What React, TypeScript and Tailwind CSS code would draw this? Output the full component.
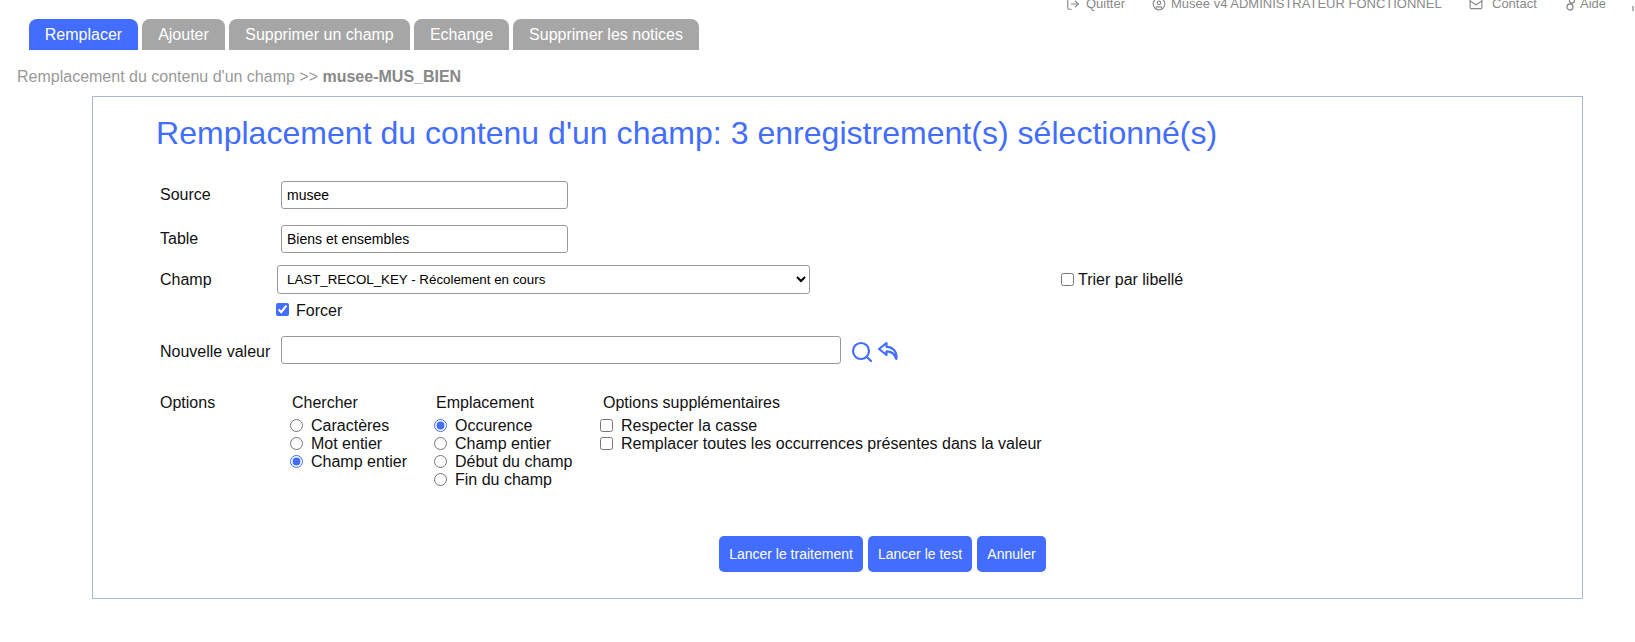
import React from "react";
import { Search, LogOut, CircleUser, Mail } from "lucide-react";

const Tab = ({ children, active, w }: { children: React.ReactNode; active?: boolean; w: string }) => (
  <div className={`${w} h-[31px] pt-[1px] rounded-t-[8px] flex items-center justify-center text-[16px] text-white ${active ? "bg-[#426dff]" : "bg-[#a6a6a6]"}`}>{children}</div>
);
const Radio = ({ label, checked }: { label: string; checked?: boolean }) => (
  <label className="flex items-center h-[18px] -ml-[2px]">
    <input type="radio" readOnly checked={!!checked} className="w-[13px] h-[13px] mr-[8px] accent-[#426dff]" />
    <span className="pt-[2px]">{label}</span>
  </label>
);
const Check = ({ label }: { label: string }) => (
  <label className="flex items-center h-[18px] -ml-[3px]">
    <input type="checkbox" readOnly className="w-[13px] h-[13px] mr-[8px]" />
    <span className="pt-[2px]">{label}</span>
  </label>
);
const Btn = ({ children, w }: { children: React.ReactNode; w: string }) => (
  <div className={`${w} h-[36px] rounded-[5px] bg-[#426dff] text-white text-[14px] flex items-center justify-center`}>{children}</div>
);

const ReplyIcon = () => (
  <svg width="22" height="20" viewBox="0 0 22 20" fill="none" stroke="#426dff" strokeWidth="2.2" strokeLinejoin="round" strokeLinecap="round" className="ml-[3px] mt-[2px]">
    <path d="M9.5 2 2 8l7.5 6v-3.6c4.5 0 8 1.6 9.8 7.6 1-6.5-2.5-12-9.8-12.2z" />
  </svg>
);

export default function App() {
  return (
    <div className="w-[1635px] h-[642px] overflow-hidden bg-white font-['Liberation_Sans',Arial,sans-serif] text-[16px] text-[#111]">
      <div className="h-[19px] overflow-hidden text-[13px] text-[#8a8a8a]">
        <div className="flex items-center h-[15px] -mt-[4px] pl-[1066px]">
          <LogOut size={14} />
          <span className="ml-[6px] w-[66px]">Quitter</span>
          <CircleUser size={14} />
          <span className="ml-[5px] w-[298px]">Musée v4 ADMINISTRATEUR FONCTIONNEL</span>
          <Mail size={14} />
          <span className="ml-[9px] w-[74px]">Contact</span>
          <svg width="10" height="14" viewBox="0 0 10 14" fill="none" stroke="currentColor" strokeWidth="1.3"><circle cx="6" cy="3.5" r="2.5" /><circle cx="4" cy="10" r="3" /></svg>
          <span className="ml-[4px] w-[52px]">Aide</span>
          <span className="w-[2px] h-[5px] mt-[9px] bg-[#b5b5b5]" />
        </div>
      </div>
      <div className="flex gap-[4px] pl-[29px] h-[31px]">
        <Tab active w="w-[109px]">Remplacer</Tab>
        <Tab w="w-[83px]">Ajouter</Tab>
        <Tab w="w-[181px]">Supprimer un champ</Tab>
        <Tab w="w-[95px]">Echange</Tab>
        <Tab w="w-[186px]">Supprimer les notices</Tab>
      </div>
      <div className="pl-[17px] pt-[15px] h-[46px] text-[#999]">
        Remplacement du contenu d'un champ &gt;&gt; <b className="text-[#888]">musee-MUS_BIEN</b>
      </div>
      <div className="ml-[92px] w-[1491px] h-[503px] border border-[#a9b8cc] pl-[63px] pt-[18px]">
        <h1 className="text-[32px] leading-[37px] tracking-[0.03px] text-[#426dff]">Remplacement du contenu d'un champ: 3 enregistrement(s) sélectionné(s)</h1>
        <div className="mt-[29px] flex items-center h-[28px] pl-[4px]">
          <span className="w-[121px]">Source</span>
          <input readOnly value="musee" className="w-[287px] h-[28px] border border-[#999] rounded-[3px] px-[5px] text-[14px] text-black" />
        </div>
        <div className="mt-[16px] flex items-center h-[28px] pl-[4px]">
          <span className="w-[121px]">Table</span>
          <input readOnly value="Biens et ensembles" className="w-[287px] h-[28px] border border-[#999] rounded-[3px] px-[5px] text-[14px] text-black" />
        </div>
        <div className="mt-[12px] flex items-center h-[29px] pl-[4px]">
          <span className="w-[117px] pt-[1px]">Champ</span>
          <select className="w-[533px] h-[29px] border border-[#999] rounded-[3px] px-[5px] text-[13.33px] text-black bg-white">
            <option>LAST_RECOL_KEY - Récolement en cours</option>
          </select>
          <label className="ml-[251px] flex items-center">
            <input type="checkbox" readOnly className="w-[13px] h-[13px] mr-[4px]" />Trier par libellé
          </label>
        </div>
        <label className="mt-[3px] ml-[120px] h-[24px] flex items-center">
          <input type="checkbox" readOnly checked className="w-[13px] h-[13px] mr-[7px] accent-[#426dff]" />
          <span className="pt-[3px]">Forcer</span>
        </label>
        <div className="mt-[15px] flex items-center h-[28px] pl-[4px]">
          <span className="w-[121px] pt-[3px]">Nouvelle valeur</span>
          <input readOnly className="w-[560px] h-[28px] border border-[#999] rounded-[3px]" />
          <Search size={24} className="ml-[9px] mt-[3px] text-[#426dff]" strokeWidth={2.2} />
          <ReplyIcon />
        </div>
        <div className="mt-[24px] flex pl-[4px]">
          <span className="w-[132px] h-[28px] pt-[1px] flex items-center">Options</span>
          <div className="w-[144px]">
            <div className="h-[28px] pt-[1px] flex items-center">Chercher</div>
            <Radio label="Caractères" /><Radio label="Mot entier" /><Radio label="Champ entier" checked />
          </div>
          <div className="w-[167px]">
            <div className="h-[28px] pt-[1px] flex items-center">Emplacement</div>
            <Radio label="Occurence" checked /><Radio label="Champ entier" /><Radio label="Début du champ" /><Radio label="Fin du champ" />
          </div>
          <div>
            <div className="h-[28px] pt-[1px] flex items-center">Options supplémentaires</div>
            <Check label="Respecter la casse" /><Check label="Remplacer toutes les occurrences présentes dans la valeur" />
          </div>
        </div>
        <div className="mt-[48px] ml-[563px] flex gap-[5px]">
          <Btn w="w-[144px]">Lancer le traitement</Btn>
          <Btn w="w-[104px]">Lancer le test</Btn>
          <Btn w="w-[69px]">Annuler</Btn>
        </div>
      </div>
    </div>
  );
}
